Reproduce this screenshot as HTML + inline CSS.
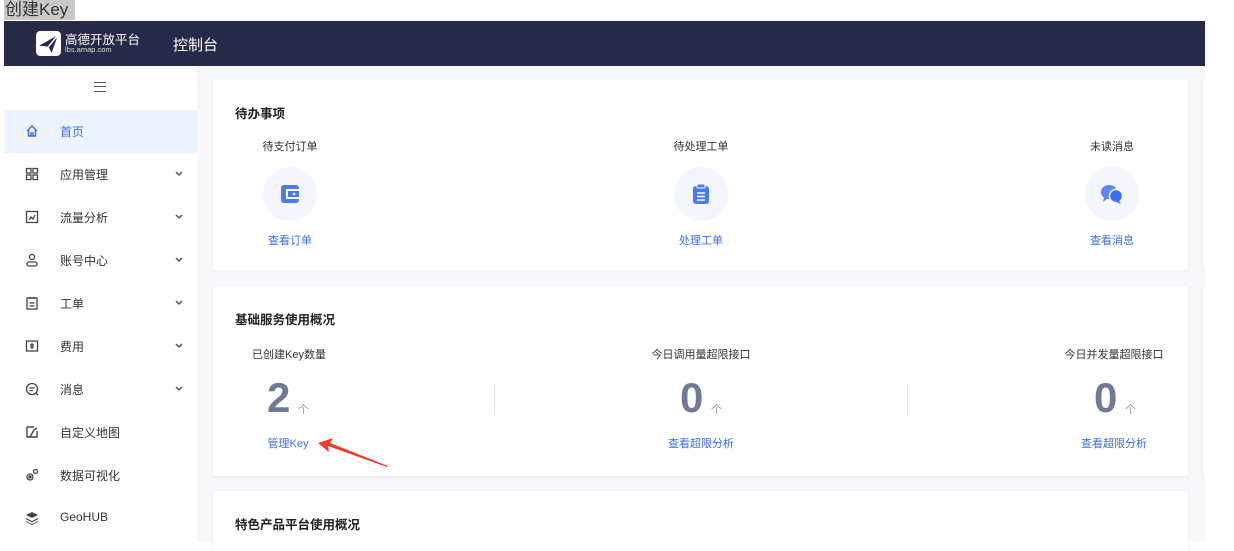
<!DOCTYPE html>
<html><head><meta charset="utf-8"><style>
*{margin:0;padding:0;box-sizing:border-box}
body{width:1234px;height:542px;overflow:hidden;background:#fff;font-family:"Liberation Sans","Noto Sans CJK SC",sans-serif;position:relative;color:#333}
.a{position:absolute}
.hdr{left:4px;top:21px;width:1201px;height:45px;background:#262947}
.side{left:4px;top:66px;width:195px;height:476px;background:#fff;border-right:1px solid #eceef2}
.main{left:199px;top:66px;width:1006px;height:476px;background:#f7f8fa}
.card{background:#fff;box-shadow:0 1px 3px rgba(0,0,0,.08);border-radius:2px}
.mi{position:absolute;left:0;width:195px;height:43px;font-size:12px;color:#333}
.mi .t{position:absolute;left:56px;top:13px}
.mi .ic{position:absolute;left:21px;top:14px;width:14px;height:14px}
.mi .ch{position:absolute;left:171px;top:18px;width:8px;height:6px}
.lbl{font-size:11px;color:#333;text-align:center;width:200px}
.lnk{font-size:11px;color:#3b6cf6;text-align:center;width:200px}
.circ{width:54px;height:54px;border-radius:50%;background:#f3f6fd}
.num{font-size:42px;font-weight:bold;color:#6f7a93;font-family:"Liberation Sans",sans-serif}
.ge{font-size:11px;color:#999}
.ttl{font-size:12.5px;font-weight:bold;color:#222}
</style></head><body>
<div class="a" style="left:4px;top:0;width:71px;height:20px;background:#c9c9c9;font-size:17px;line-height:19px;color:#333;padding-left:1px">创建Key</div>
<div class="a hdr">
  <svg class="a" style="left:31px;top:9px" width="27" height="27" viewBox="0 0 26 26"><rect x="1" y="1" width="24" height="24" rx="4" fill="#fff"/><path d="M4 15 L22 5 L16 22 L13 16 Z" fill="#262947"/><path d="M13 16 L22 5" stroke="#fff" stroke-width="1.5"/></svg>
  <div class="a" style="left:61px;top:8px;color:#fff;font-size:12.5px">高德开放平台</div>
  <div class="a" style="left:61px;top:24px;color:#ddd;font-size:7.5px">lbs.amap.com</div>
  <div class="a" style="left:169px;top:13px;color:#fff;font-size:15px">控制台</div>
</div>
<div class="a side">
  <div class="a" style="left:90px;top:16px;width:12px;height:10px;border-top:1.5px solid #555;border-bottom:1.5px solid #555"><div style="margin-top:3px;border-top:1.5px solid #555"></div></div>
  <div class="a" style="left:0;top:44px;width:195px;height:1px;background:#e8eaee"></div>
  <div class="mi" style="top:44px;background:#eef4ff;color:#3b6cf6"><svg class="ic" viewBox="0 0 14 14"><path d="M2 7 L7 2 L12 7 M3.5 6 V12 H10.5 V6 M6 12 V9 H8 V12" fill="none" stroke="#3b6cf6" stroke-width="1.4"/></svg><span class="t">首页</span></div>
  <div class="mi" style="top:87px"><svg class="ic" viewBox="0 0 14 14"><g fill="none" stroke="#444" stroke-width="1.3"><rect x="1.5" y="1.5" width="4.5" height="4.5"/><rect x="8" y="1.5" width="4.5" height="4.5"/><rect x="1.5" y="8" width="4.5" height="4.5"/><rect x="8" y="8" width="4.5" height="4.5"/></g></svg><span class="t">应用管理</span><svg class="ch" viewBox="0 0 8 6"><path d="M1 1 L4 4 L7 1" fill="none" stroke="#555" stroke-width="1.5"/></svg></div>
  <div class="mi" style="top:130px"><svg class="ic" viewBox="0 0 14 14"><g fill="none" stroke="#444" stroke-width="1.3"><rect x="1.5" y="1.5" width="11" height="11"/><path d="M4 10 L6 7 L8 9 L10 5"/></g></svg><span class="t">流量分析</span><svg class="ch" viewBox="0 0 8 6"><path d="M1 1 L4 4 L7 1" fill="none" stroke="#555" stroke-width="1.5"/></svg></div>
  <div class="mi" style="top:173px"><svg class="ic" viewBox="0 0 14 14"><g fill="none" stroke="#444" stroke-width="1.3"><circle cx="7" cy="4" r="2.5"/><rect x="2" y="9" width="10" height="4" rx="2"/></g></svg><span class="t">账号中心</span><svg class="ch" viewBox="0 0 8 6"><path d="M1 1 L4 4 L7 1" fill="none" stroke="#555" stroke-width="1.5"/></svg></div>
  <div class="mi" style="top:216px"><svg class="ic" viewBox="0 0 14 14"><g fill="none" stroke="#444" stroke-width="1.3"><rect x="2" y="2" width="10" height="11"/><path d="M5 1 V3 M9 1 V3 M4.5 7 H9.5 M4.5 10 H9.5"/></g></svg><span class="t">工单</span><svg class="ch" viewBox="0 0 8 6"><path d="M1 1 L4 4 L7 1" fill="none" stroke="#555" stroke-width="1.5"/></svg></div>
  <div class="mi" style="top:259px"><svg class="ic" viewBox="0 0 14 14"><g fill="none" stroke="#444" stroke-width="1.3"><rect x="1.5" y="2" width="11" height="10"/><path d="M7 4 V10 M5 6 H9 M5 8 H9"/></g></svg><span class="t">费用</span><svg class="ch" viewBox="0 0 8 6"><path d="M1 1 L4 4 L7 1" fill="none" stroke="#555" stroke-width="1.5"/></svg></div>
  <div class="mi" style="top:302px"><svg class="ic" viewBox="0 0 14 14"><g fill="none" stroke="#444" stroke-width="1.3"><circle cx="7" cy="7" r="5.5"/><path d="M4.5 6 H9.5 M4.5 8.5 H8 M11 11 L13 13"/></g></svg><span class="t">消息</span><svg class="ch" viewBox="0 0 8 6"><path d="M1 1 L4 4 L7 1" fill="none" stroke="#555" stroke-width="1.5"/></svg></div>
  <div class="mi" style="top:345px"><svg class="ic" viewBox="0 0 14 14"><g fill="none" stroke="#444" stroke-width="1.4"><path d="M2 2 H9 M2 2 V12 H12 V6 M5 12 L9 5 L12 3"/></g></svg><span class="t">自定义地图</span></div>
  <div class="mi" style="top:388px"><svg class="ic" viewBox="0 0 14 14"><g fill="none" stroke="#444" stroke-width="1.3"><circle cx="5" cy="9" r="3"/><circle cx="5" cy="9" r="1" fill="#444"/><circle cx="10.5" cy="3.5" r="2"/></g></svg><span class="t">数据可视化</span></div>
  <div class="mi" style="top:431px"><svg class="ic" viewBox="0 0 14 14"><g fill="#444"><path d="M7 1 L13 4 L7 7 L1 4 Z"/><path d="M1 7 L7 10 L13 7 V8.2 L7 11.2 L1 8.2 Z"/><path d="M1 10 L7 13 L13 10 V11 L7 14 L1 11 Z"/></g></svg><span class="t">GeoHUB</span></div>
</div>
<div class="a main"></div>
<div class="a card" style="left:1203px;top:80px;width:10px;height:190px"></div>
<div class="a card" style="left:1203px;top:286px;width:10px;height:190px"></div>
<div class="a" style="left:1205px;top:0;width:29px;height:542px;background:#fff"></div>

<div class="a card" style="left:213px;top:80px;width:975px;height:190px">
  <div class="a ttl" style="left:22px;top:23px">待办事项</div>
  <div class="a lbl" style="left:-23px;top:58px">待支付订单</div>
  <div class="a circ" style="left:50px;top:87px"><svg class="a" style="left:17px;top:17px" width="20" height="20" viewBox="0 0 20 20"><rect x="1" y="1" width="18" height="18" rx="3" fill="#4a7bf7"/><rect x="6" y="5" width="13" height="10" fill="#fff"/><rect x="8" y="7" width="11" height="6" fill="#4a7bf7"/><circle cx="14" cy="10" r="1.3" fill="#fff"/></svg></div>
  <div class="a lnk" style="left:-23px;top:152px">查看订单</div>
  <div class="a lbl" style="left:388px;top:58px">待处理工单</div>
  <div class="a circ" style="left:461px;top:87px"><svg class="a" style="left:17px;top:16px" width="20" height="22" viewBox="0 0 20 22"><rect x="2" y="3" width="16" height="18" rx="3" fill="#4a7bf7"/><rect x="6" y="1" width="8" height="4" rx="1" fill="#4a7bf7" stroke="#fff" stroke-width="1"/><path d="M6 10 H14 M6 13.5 H14 M6 17 H14" stroke="#fff" stroke-width="1.5"/></svg></div>
  <div class="a lnk" style="left:388px;top:152px">处理工单</div>
  <div class="a lbl" style="left:799px;top:58px">未读消息</div>
  <div class="a circ" style="left:872px;top:87px"><svg class="a" style="left:14px;top:16px" width="26" height="22" viewBox="0 0 26 22"><ellipse cx="10" cy="9" rx="8" ry="7" fill="#5c86f5"/><path d="M5 14 L4 19 L9 15Z" fill="#5c86f5"/><circle cx="17" cy="13" r="6.5" fill="#3b6cf6" stroke="#f3f6fd" stroke-width="1.5"/><path d="M20 18 L22 21 L17 19Z" fill="#3b6cf6"/></svg></div>
  <div class="a lnk" style="left:799px;top:152px">查看消息</div>
</div>

<div class="a card" style="left:213px;top:286px;width:975px;height:190px">
  <div class="a ttl" style="left:22px;top:23px">基础服务使用概况</div>
  <div class="a lbl" style="left:-24px;top:60px">已创建Key数量</div>
  <div class="a num" style="left:54px;top:88px">2</div><div class="a ge" style="left:85px;top:115px">个</div>
  <div class="a lnk" style="left:-25px;top:149px">管理Key</div>
  <div class="a" style="left:281px;top:97px;width:1px;height:32px;background:#e3e5ea"></div>
  <div class="a lbl" style="left:388px;top:60px">今日调用量超限接口</div>
  <div class="a num" style="left:467px;top:88px">0</div><div class="a ge" style="left:498px;top:115px">个</div>
  <div class="a lnk" style="left:388px;top:149px">查看超限分析</div>
  <div class="a" style="left:694px;top:97px;width:1px;height:32px;background:#e3e5ea"></div>
  <div class="a lbl" style="left:801px;top:60px">今日并发量超限接口</div>
  <div class="a num" style="left:881px;top:88px">0</div><div class="a ge" style="left:912px;top:115px">个</div>
  <div class="a lnk" style="left:801px;top:149px">查看超限分析</div>
</div>

<div class="a card" style="left:213px;top:491px;width:975px;height:60px">
  <div class="a ttl" style="left:22px;top:23px">特色产品平台使用概况</div>
</div>

<svg class="a" style="left:310px;top:436px" width="82" height="32" viewBox="0 0 82 32"><path d="M8 7 L23 2 L20 7 L78 30 L77 31 L18 10 L19 16 Z" fill="#f03a2e"/></svg>
</body></html>
